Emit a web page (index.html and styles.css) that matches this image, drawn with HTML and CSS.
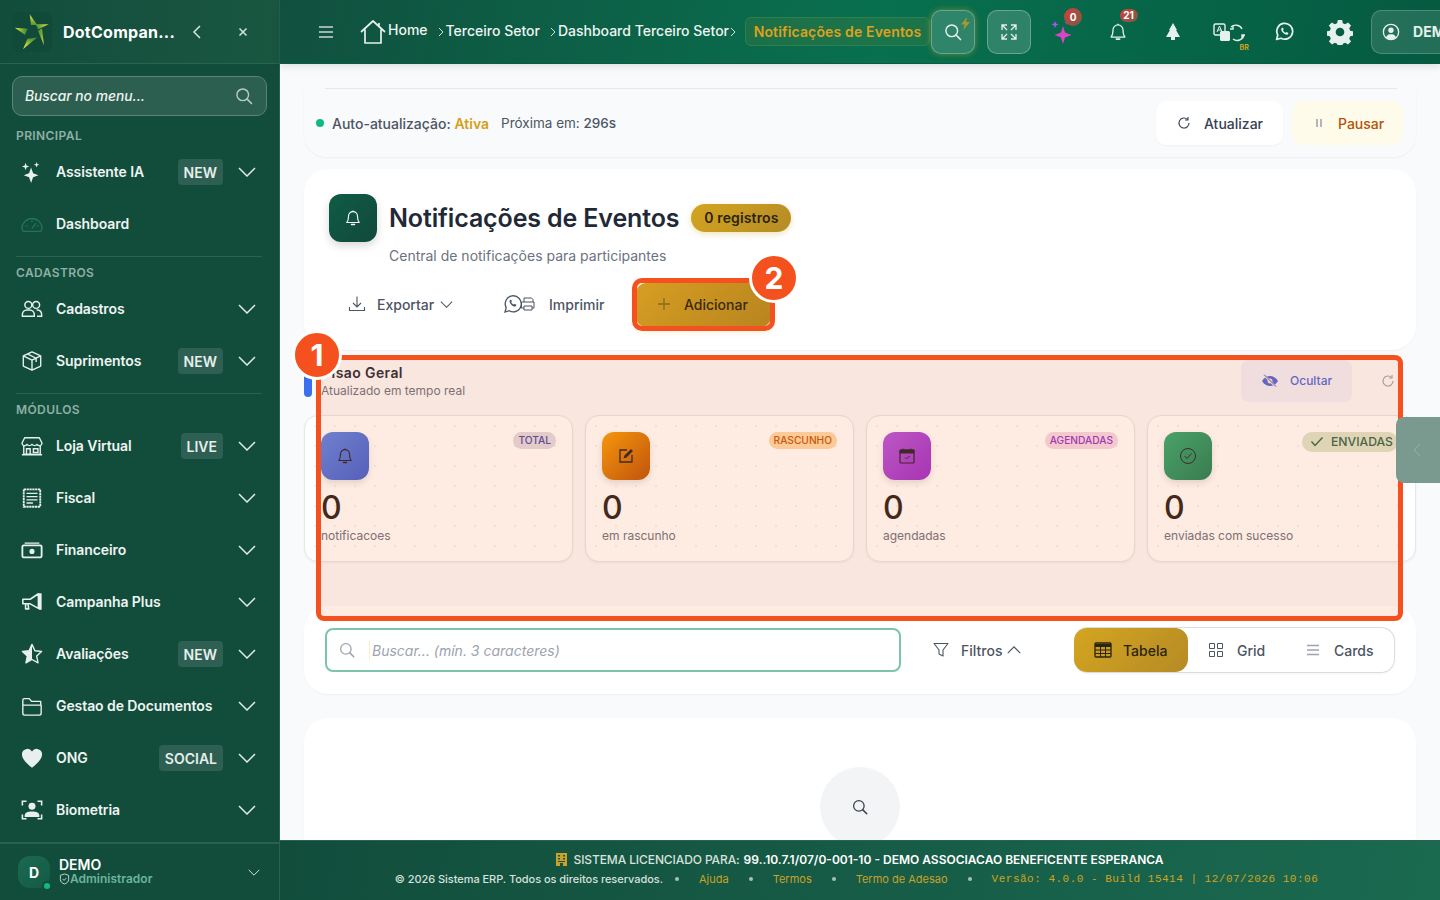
FILE: index.html
```html
<!DOCTYPE html>
<html lang="pt-BR">
<head>
<meta charset="utf-8">
<title>Notificações de Eventos</title>
<link rel="stylesheet" href="styles.css">
</head>
<body>
<svg class="sprite" xmlns="http://www.w3.org/2000/svg">
  <symbol id="chev" viewBox="0 0 18 10"><path d="M1 1l8 8 8-8" fill="none" stroke="currentColor" stroke-width="1.5"/></symbol>
  <symbol id="search" viewBox="0 0 24 24"><circle cx="10.5" cy="10.5" r="7" fill="none" stroke="currentColor" stroke-width="1.7"/><path d="M15.8 15.8L21 21" stroke="currentColor" stroke-width="2" stroke-linecap="round"/></symbol>
  <symbol id="bell" viewBox="0 0 24 24"><path d="M12 3.5a6 6 0 0 0-6 6c0 5-1 7-2.300 8.500h16.600C19 16.500 18 14.500 18 9.500a6 6 0 0 0-6-6z" fill="none" stroke="currentColor" stroke-width="1.500" stroke-linejoin="round"/><path d="M10 20.500h4" stroke="currentColor" stroke-width="2" stroke-linecap="round"/><path d="M12 2v1.500" stroke="currentColor" stroke-width="1.500"/></symbol>
  <symbol id="refresh" viewBox="0 0 24 24"><path d="M19.500 12a7.500 7.500 0 1 1-2.200-5.300" fill="none" stroke="currentColor" stroke-width="1.700"/><path d="M18 3v4.500h-4.500" fill="none" stroke="currentColor" stroke-width="1.700"/></symbol>
</svg>

<div class="app">
  <aside class="sidebar">
    <div class="brand">
      <span class="logo">
        <svg viewBox="0 0 40 40" width="40" height="40">
          <defs><radialGradient id="lg" gradientUnits="userSpaceOnUse" cx="20" cy="20" r="20"><stop offset=".2" stop-color="#1f7f3f"/><stop offset=".75" stop-color="#c8d235"/><stop offset="1" stop-color="#e6e04a"/></radialGradient></defs>
          <path d="M17.700 2.300L25 12.800 19 13zM36.700 12.300L26 17.500 23.800 12.300zM32 33.300L26 19 30 16.500zM11 37.300L25 25.500 15.500 26.800zM2.700 15.700L15.800 16.800 13 22.800z" fill="url(#lg)"/>
        </svg>
      </span>
      <span class="brand-name">DotCompan...</span>
      <svg class="brand-back" width="10" height="14" viewBox="0 0 10 14"><path d="M8 1L2 7l6 6" fill="none" stroke="currentColor" stroke-width="1.500"/></svg>
      <svg class="brand-close" width="10" height="10" viewBox="0 0 10 10"><path d="M1.500 1.500l7 7M8.500 1.500l-7 7" stroke="currentColor" stroke-width="1.500"/></svg>
    </div>
    <div class="menu-search">
      <span>Buscar no menu...</span>
      <svg width="20" height="20" class="menu-search-ico"><use href="#search"/></svg>
    </div>

    <div class="nav-label first">PRINCIPAL</div>
    <div class="nav-item">
      <svg class="nav-ico" viewBox="0 0 24 24"><path d="M11 7l2.200 6.300L19 15.500l-5.800 2.200L11 24l-2.200-6.300L3 15.500l5.800-2.200z" fill="currentColor"/><path d="M5 2l1 3 3 1-3 1-1 3-1-3-3-1 3-1zM17 1l.8 2.200L20 4l-2.200.8L17 7l-.8-2.200L14 4l2.200-.8z" fill="currentColor"/></svg>
      <span class="nav-text">Assistente IA</span><span class="nav-tag">NEW</span>
      <svg class="nav-chev"><use href="#chev"/></svg>
    </div>
    <div class="nav-item">
      <svg class="nav-ico dim" viewBox="0 0 24 24"><path d="M3 20a3 3 0 0 1-2-3 11 11 0 0 1 22 0 3 3 0 0 1-2 3z" fill="none" stroke="currentColor" stroke-width="1.400"/><path d="M12 17l4-6M5 14h2M17 14h2M12 8v2" stroke="currentColor" stroke-width="1.400"/></svg>
      <span class="nav-text">Dashboard</span>
    </div>
    <div class="nav-divider"></div>

    <div class="nav-label">CADASTROS</div>
    <div class="nav-item">
      <svg class="nav-ico" viewBox="0 0 24 24"><circle cx="8" cy="7.500" r="3.800" fill="none" stroke="currentColor" stroke-width="1.600"/><circle cx="16.500" cy="7.500" r="3.800" fill="none" stroke="currentColor" stroke-width="1.600"/><path d="M1.500 20v-2a5 5 0 0 1 5-5h3a5 5 0 0 1 5 5v2zM17 13h1a5 5 0 0 1 4.500 5v2h-5" fill="none" stroke="currentColor" stroke-width="1.600"/></svg>
      <span class="nav-text">Cadastros</span>
      <svg class="nav-chev"><use href="#chev"/></svg>
    </div>
    <div class="nav-item">
      <svg class="nav-ico" viewBox="0 0 24 24"><path d="M12 2l9.500 4.500v11L12 22l-9.500-4.500v-11zM2.500 6.500L12 11l9.500-4.500M12 11v11M7 4.300l9.500 4.700v4" fill="none" stroke="currentColor" stroke-width="1.500" stroke-linejoin="round"/></svg>
      <span class="nav-text">Suprimentos</span><span class="nav-tag">NEW</span>
      <svg class="nav-chev"><use href="#chev"/></svg>
    </div>
    <div class="nav-divider"></div>

    <div class="nav-label">MÓDULOS</div>
    <div class="nav-item">
      <svg class="nav-ico" viewBox="0 0 24 24"><path d="M4 3h16l3 6a3 3 0 0 1-5.500 1.200 3.500 3.500 0 0 1-5.500 0 3.500 3.500 0 0 1-5.500 0A3 3 0 0 1 1 9z" fill="none" stroke="currentColor" stroke-width="1.500" stroke-linejoin="round"/><path d="M3 12v9h18v-9M1 21.500h22M6 21v-6h4v6M13.500 15h5v4h-5z" fill="none" stroke="currentColor" stroke-width="1.500"/></svg>
      <span class="nav-text">Loja Virtual</span><span class="nav-tag">LIVE</span>
      <svg class="nav-chev"><use href="#chev"/></svg>
    </div>
    <div class="nav-item">
      <svg class="nav-ico" viewBox="0 0 24 24"><rect x="3" y="2.500" width="18" height="19" fill="none" stroke="currentColor" stroke-width="2" stroke-dasharray="2.500 .6"/><path d="M6 7h12M6 10.500h12M6 14h12M6 17.500h7" stroke="currentColor" stroke-width="1.500"/></svg>
      <span class="nav-text">Fiscal</span>
      <svg class="nav-chev"><use href="#chev"/></svg>
    </div>
    <div class="nav-item">
      <svg class="nav-ico" viewBox="0 0 24 24"><path d="M4 4.500h16" stroke="currentColor" stroke-width="1.400"/><rect x="1.500" y="7" width="21" height="13" rx="1.500" fill="none" stroke="currentColor" stroke-width="2"/><circle cx="12" cy="13.500" r="2.800" fill="currentColor"/></svg>
      <span class="nav-text">Financeiro</span>
      <svg class="nav-chev"><use href="#chev"/></svg>
    </div>
    <div class="nav-item">
      <svg class="nav-ico" viewBox="0 0 24 24"><path d="M2 9h8l9-6v16l-9-5H2zM5 14v5.500h3.500L7.500 14" fill="none" stroke="currentColor" stroke-width="1.700" stroke-linejoin="round"/><path d="M19.500 2.500h3v18h-3z" fill="currentColor"/></svg>
      <span class="nav-text">Campanha Plus</span>
      <svg class="nav-chev"><use href="#chev"/></svg>
    </div>
    <div class="nav-item">
      <svg class="nav-ico" viewBox="0 0 24 24"><path d="M12 1.500l3.200 7 7.300.8-5.400 5 1.500 7.400L12 18l-6.600 3.700 1.500-7.400-5.400-5 7.300-.8z" fill="none" stroke="currentColor" stroke-width="1.500" stroke-linejoin="round"/><path d="M12 1.500v16.500l-6.600 3.700 1.500-7.400-5.400-5 7.300-.8z" fill="currentColor"/></svg>
      <span class="nav-text">Avaliações</span><span class="nav-tag">NEW</span>
      <svg class="nav-chev"><use href="#chev"/></svg>
    </div>
    <div class="nav-item">
      <svg class="nav-ico" viewBox="0 0 24 24"><path d="M2 20V5.500A1.500 1.500 0 0 1 3.500 4h5.500l2.500 3h10v4M2 11h20v9a2 2 0 0 1-2 2H4a2 2 0 0 1-2-2z" fill="none" stroke="currentColor" stroke-width="1.500" stroke-linejoin="round"/></svg>
      <span class="nav-text">Gestao de Documentos</span>
      <svg class="nav-chev"><use href="#chev"/></svg>
    </div>
    <div class="nav-item">
      <svg class="nav-ico" viewBox="0 0 24 24"><path d="M12 22.500C5 17 1 13 1 8a6 6 0 0 1 11-3.200A6 6 0 0 1 23 8c0 5-4 9-11 14.500z" fill="currentColor"/></svg>
      <span class="nav-text">ONG</span><span class="nav-tag">SOCIAL</span>
      <svg class="nav-chev"><use href="#chev"/></svg>
    </div>
    <div class="nav-item">
      <svg class="nav-ico" viewBox="0 0 24 24"><path d="M1.500 7V2.500H6M18 2.500h4.500V7M1.500 17v4.500H6M18 21.500h4.500V17" fill="none" stroke="currentColor" stroke-width="1.700"/><circle cx="12" cy="8" r="3.800" fill="currentColor"/><path d="M4 19.500v-1.500c0-3 3-4.500 8-4.500s8 1.500 8 4.500v1.500z" fill="currentColor"/></svg>
      <span class="nav-text">Biometria</span>
      <svg class="nav-chev"><use href="#chev"/></svg>
    </div>

    <div class="user-box">
      <span class="avatar">D<i class="avatar-dot"></i></span>
      <span class="user-info">
        <span class="user-name">DEMO</span>
        <span class="user-role">
          <svg width="11" height="12" viewBox="0 0 12 13"><path d="M6 1l4.500 1.500V7c0 2.500-2 4-4.500 5C3.500 11 1.500 9.500 1.500 7V2.500z" fill="none" stroke="currentColor" stroke-width="1"/><path d="M4 6.500l1.500 1.500L8 5.500" fill="none" stroke="currentColor"/></svg>Administrador</span>
      </span>
      <svg class="user-chev"><use href="#chev"/></svg>
    </div>
  </aside>

  <div class="main">
    <header class="topbar">
      <svg class="burger" width="14" height="12" viewBox="0 0 14 12"><path d="M0 1h14M0 6h14M0 11h14" stroke="currentColor" stroke-width="1.400"/></svg>
      <svg class="home-ico" width="26" height="24" viewBox="0 0 26 24"><path d="M1 12L13 1l12 11M5 9.500V23h16V9.500M19 3v4" fill="none" stroke="currentColor" stroke-width="1.700" stroke-linejoin="round"/></svg>
      <span class="crumb crumb-home">Home</span>
      <svg class="sep sep-1" width="6" height="10" viewBox="0 0 6 10"><path d="M1 1l4 4-4 4" fill="none" stroke="currentColor"/></svg>
      <span class="crumb">Terceiro Setor</span>
      <svg class="sep sep-2" width="6" height="10" viewBox="0 0 6 10"><path d="M1 1l4 4-4 4" fill="none" stroke="currentColor"/></svg>
      <span class="crumb">Dashboard Terceiro Setor</span>
      <svg class="sep sep-3" width="6" height="10" viewBox="0 0 6 10"><path d="M1 1l4 4-4 4" fill="none" stroke="currentColor"/></svg>
      <span class="crumb-active">Notificações de Eventos</span>
      <span class="glass-btn search-btn">
        <svg width="20" height="20"><use href="#search"/></svg>
        <svg class="bolt" width="9" height="13" viewBox="0 0 9 13"><path d="M6 0L0 7.500h3.500L2.500 13 9 5H5z" fill="#a8982e"/></svg>
      </span>
      <span class="glass-btn expand-btn">
        <svg width="18" height="18" viewBox="0 0 18 18"><path d="M2 7V2h5M2 2l5 5M11 2h5v5M16 2l-5 5M2 11v5h5M2 16l5-5M16 11v5h-5M16 16l-5-5" fill="none" stroke="currentColor" stroke-width="1.300"/></svg>
      </span>
      <span class="slot first-slot">
        <svg width="24" height="26" viewBox="0 0 24 26"><path d="M13 7l2 6.500 6.500 2.500-6.500 2.500-2 6.500-2-6.500L4.500 16 11 13.500z" fill="#d946c4"/><path d="M5 2l1 2.500 2.500 1L6 6.500 5 9 4 6.500l-2.500-1L4 4.500zM17 1l.6 1.800 1.700.7-1.700.7L17 6l-.6-1.800-1.700-.7 1.700-.7z" fill="#a855f7"/></svg>
        <b class="count count-0">0</b>
      </span>
      <span class="slot">
        <svg width="20" height="20"><use href="#bell"/></svg>
        <b class="count count-21">21</b>
      </span>
      <span class="slot">
        <svg width="16" height="20" viewBox="0 0 16 20"><path d="M8 1l4 7h-1l4 7h-5v3H6v-3H1l4-7H4z" fill="currentColor"/></svg>
      </span>
      <span class="slot">
        <svg width="32" height="20" viewBox="0 0 32 20"><rect x="1" y="2" width="11" height="11" rx="1.500" fill="none" stroke="currentColor" stroke-width="1.400"/><rect x="7" y="9" width="10" height="10" rx="1.500" fill="currentColor"/><path d="M4 10l2.500-6L9 10M4.800 8h3.400" fill="none" stroke="currentColor"/><path d="M29 7a7 7 0 0 0-11-2M20 17a7 7 0 0 0 11-4M20 4v3h-3M29 16v-3h3" fill="none" stroke="currentColor" stroke-width="1.400"/></svg>
        <b class="lang">BR</b>
      </span>
      <span class="slot">
        <svg width="19" height="19" viewBox="0 0 24 24"><path d="M2 22l1.500-5.500A10 10 0 1 1 7.500 20.500z" fill="none" stroke="currentColor" stroke-width="2.200" stroke-linejoin="round"/><path d="M8.500 7.500c-1 1-1 3 1 5.500s4.500 3.500 6 3 1.800-2 1-2.500l-2-1-1 1c-1 0-3-2-3.500-3.500l1-1-1-2z" fill="currentColor"/></svg>
      </span>
      <span class="slot">
        <svg width="26" height="26" viewBox="0 0 24 24"><path fill="currentColor" fill-rule="evenodd" d="M10 1h4l.6 3 2.200.9 2.600-1.700 2.800 2.800-1.700 2.600.9 2.200 3 .6v4l-3 .6-.9 2.200 1.700 2.600-2.800 2.800-2.600-1.700-2.200.9-.6 3h-4l-.6-3-2.200-.9-2.600 1.700-2.800-2.800 1.700-2.600-.9-2.200-3-.6v-4l3-.6.9-2.200L1.700 6l2.800-2.800 2.600 1.700 2.200-.9zM12 8a4 4 0 1 0 0 8 4 4 0 0 0 0-8z"/></svg>
      </span>
      <span class="user-btn">
        <svg width="18" height="18" viewBox="0 0 20 20"><circle cx="10" cy="10" r="8.500" fill="none" stroke="currentColor" stroke-width="1.500"/><circle cx="10" cy="8" r="3" fill="currentColor"/><path d="M4.500 16c1-3 3-3.500 5.500-3.500s4.500.5 5.500 3.500a8 8 0 0 1-11 0z" fill="currentColor"/></svg>
        <span class="user-btn-text">DEMO</span>
      </span>
    </header>

    <main class="content">
      <section class="refresh-card">
        <div class="refresh-line"></div>
        <div class="refresh-row">
          <i class="live-dot"></i>
          <span class="refresh-text">Auto-atualização: <b class="ativa">Ativa</b></span>
          <span class="refresh-next">Próxima em: <b>296s</b></span>
          <span class="refresh-btn btn-update">
            <svg width="16" height="16"><use href="#refresh"/></svg>Atualizar
          </span>
          <span class="refresh-btn btn-pause">
            <svg width="10" height="10" viewBox="0 0 10 10"><path d="M3 1v8M7 1v8" stroke="#6b7280"/></svg>Pausar
          </span>
        </div>
      </section>

      <section class="page-card">
        <div class="title-row">
          <span class="title-ico"><svg width="18" height="18"><use href="#bell"/></svg></span>
          <h1 class="title">Notificações de Eventos</h1>
          <span class="count-pill">0 registros</span>
        </div>
        <p class="subtitle">Central de notificações para participantes</p>
        <div class="actions">
          <span class="action action-export">
            <svg width="18" height="18" viewBox="0 0 18 18"><path d="M9 1.500v10M5 8l4 4 4-4M1.500 12v3.500h15V12" fill="none" stroke="currentColor" stroke-width="1.100"/></svg>
            Exportar
            <svg width="13" height="7" class="mini-chev"><use href="#chev"/></svg>
          </span>
          <span class="action action-print">
            <svg width="31" height="18" viewBox="0 0 31 18"><path d="M1 17l1.200-4.400A8 8 0 1 1 5.200 15.700z" fill="none" stroke="currentColor" stroke-width="1.300"/><path d="M6 5c-.7.700-.7 2.300.8 4.200s3.400 2.700 4.500 2.300 1.300-1.500.7-1.900l-1.500-.7-.7.700c-.7 0-2.200-1.400-2.600-2.600l.7-.7-.7-1.500z" fill="currentColor"/><path d="M20 7V3h7.500l1.500 1.500V7M20 13h-2.500V7H30v6h-2M20 11h8v4h-8z" fill="none" stroke="currentColor"/></svg>
            <span class="print-text">Imprimir</span>
          </span>
          <span class="add-btn">
            <svg width="14" height="14" viewBox="0 0 14 14"><path d="M7 1v12M1 7h12" stroke="#8a6a1e" stroke-width="1.300"/></svg>
            Adicionar
          </span>
        </div>
      </section>

      <section class="overview">
        <div class="overview-head">
          <i class="overview-bar"></i>
          <div class="overview-titles">
            <h2 class="overview-title">Visao Geral</h2>
            <p class="overview-sub">Atualizado em tempo real</p>
          </div>
          <span class="hide-btn">
            <svg width="18" height="14" viewBox="0 0 18 14"><path d="M1 7c2-3.500 5-5 8-5s6 1.500 8 5c-2 3.500-5 5-8 5S3 10.500 1 7z" fill="currentColor"/><circle cx="9" cy="7" r="2.500" fill="#f0dede"/><path d="M3 1l12 12" stroke="#f0dede" stroke-width="2"/><path d="M3 .5l12 12" stroke="currentColor" stroke-width="1"/></svg>
            Ocultar
          </span>
          <svg class="overview-refresh" width="16" height="16"><use href="#refresh"/></svg>
        </div>
        <div class="stats">
          <article class="stat">
            <div class="stat-top"><span class="stat-ico ico-blue"><svg width="18" height="18"><use href="#bell"/></svg></span><span class="stat-tag tag-blue">TOTAL</span></div>
            <div class="stat-num">0</div>
            <div class="stat-label">notificacoes</div>
          </article>
          <article class="stat">
            <div class="stat-top"><span class="stat-ico ico-orange"><svg width="18" height="18" viewBox="0 0 18 18"><path d="M10 3H3v12h12V8" fill="none" stroke="currentColor" stroke-width="1.300"/><path d="M6.500 11.500l1-3L14 2l2 2-6.500 6.500z" fill="currentColor"/></svg></span><span class="stat-tag tag-orange">RASCUNHO</span></div>
            <div class="stat-num">0</div>
            <div class="stat-label">em rascunho</div>
          </article>
          <article class="stat">
            <div class="stat-top"><span class="stat-ico ico-purple"><svg width="18" height="18" viewBox="0 0 18 18"><rect x="2" y="3" width="14" height="13" rx="1" fill="none" stroke="currentColor" stroke-width="1.200"/><path d="M2 3h14v3H2zM5 1.500V3M13 1.500V3" fill="currentColor" stroke="currentColor"/><path d="M7 10.500l1.500 1.500 3-3" fill="none" stroke="currentColor"/></svg></span><span class="stat-tag tag-purple">AGENDADAS</span></div>
            <div class="stat-num">0</div>
            <div class="stat-label">agendadas</div>
          </article>
          <article class="stat">
            <div class="stat-top"><span class="stat-ico ico-green"><svg width="18" height="18" viewBox="0 0 18 18"><circle cx="9" cy="9" r="7.500" fill="none" stroke="currentColor"/><path d="M5.500 9l2.500 2.500 4.500-5" fill="none" stroke="currentColor"/></svg></span><span class="stat-tag tag-green"><svg width="14" height="11" viewBox="0 0 14 11"><path d="M1.500 5.500L5 9.500l7.500-8" fill="none" stroke="currentColor" stroke-width="1.400"/></svg>ENVIADAS</span></div>
            <div class="stat-num">0</div>
            <div class="stat-label">enviadas com sucesso</div>
          </article>
        </div>
      </section>

      <section class="filter-card">
        <div class="search-field">
          <svg width="18" height="18" class="field-ico"><use href="#search"/></svg>
          <i class="caret"></i>
          <span class="placeholder">Buscar... (mín. 3 caracteres)</span>
        </div>
        <span class="filter-toggle">
          <svg width="16" height="16" viewBox="0 0 16 16"><path d="M1 1.500h14L10 8v6l-4-2V8z" fill="none" stroke="currentColor" stroke-width="1.100" stroke-linejoin="round"/></svg>
          <span class="filter-text">Filtros</span>
          <svg width="14" height="8" class="up-chev"><use href="#chev"/></svg>
        </span>
        <div class="views">
          <span class="view view-active">
            <svg width="18" height="16" viewBox="0 0 18 16"><rect x="1" y="1" width="16" height="14" rx="1" fill="none" stroke="currentColor" stroke-width="1.300"/><path d="M1 2h16v3H1z" fill="currentColor"/><path d="M1 8h16M1 11.500h16M6.500 5v10M11.500 5v10" stroke="currentColor"/></svg>
            Tabela
          </span>
          <span class="view view-grid">
            <svg width="16" height="16" viewBox="0 0 16 16"><path d="M1.500 1.500h5v5h-5zM9.500 1.500h5v5h-5zM1.500 9.500h5v5h-5zM9.500 9.500h5v5h-5z" fill="none" stroke="currentColor"/></svg>
            Grid
          </span>
          <span class="view view-cards">
            <svg width="14" height="12" viewBox="0 0 14 12"><path d="M1 1.500h12M1 6h12M1 10.500h12" stroke="#9ca3af" stroke-width="1.300"/></svg>
            Cards
          </span>
        </div>
      </section>

      <section class="results-card">
        <span class="empty-circle"><svg width="18" height="18"><use href="#search"/></svg></span>
      </section>
    </main>

    <footer class="footer">
      <div class="foot-line">
        <svg width="11" height="13" viewBox="0 0 11 13"><path fill="#c9a227" fill-rule="evenodd" d="M0 0h11v13H7v-3H4v3H0zM2 2v1.500h2V2zm5 0v1.500h2V2zM2 5v1.500h2V5zm5 0v1.500h2V5zM2 8v1h7V8z"/></svg>
        <span class="foot-muted">SISTEMA LICENCIADO PARA:</span>
        <b class="foot-strong">99..10.7.1/07/0-001-10 - DEMO ASSOCIACAO BENEFICENTE ESPERANCA</b>
      </div>
      <div class="foot-line foot-small">
        <span class="foot-muted foot-copy">© 2026 Sistema ERP. Todos os direitos reservados.</span>
        <i class="foot-dot foot-dot-first"></i><span class="foot-link">Ajuda</span>
        <i class="foot-dot"></i><span class="foot-link">Termos</span>
        <i class="foot-dot"></i><span class="foot-link">Termo de Adesao</span>
        <i class="foot-dot"></i><span class="foot-version">Versão: 4.0.0 - Build 15414 | 12/07/2026 10:06</span>
      </div>
    </footer>
  </div>
</div>

<div class="side-tab"><svg width="8" height="14" viewBox="0 0 8 14"><path d="M7 1L1 7l6 6" fill="none" stroke="currentColor"/></svg></div>
<div class="mark mark-area"></div>
<div class="mark mark-button"></div>
<div class="step step-1">1</div>
<div class="step step-2">2</div>
</body>
</html>
```

FILE: styles.css
```css
* { box-sizing: border-box; }
html, body { margin: 0; height: 100%; overflow: hidden; }
body { font-family: "Inter", "Liberation Sans", sans-serif; color: #1f2937; background: #f8fafc; }
.sprite { display: none; }
h1, h2, p { margin: 0; }
i { display: block; }

.app { display: flex; width: 1440px; height: 900px; }

/* Sidebar */
.sidebar { width: 280px; flex: none; height: 900px; background: #124d3c; color: #eef4f1; display: flex; flex-direction: column; border-right: 1px solid #2a6050; position: relative; }
.brand { height: 64px; flex: none; display: flex; align-items: center; border-bottom: 1px solid #2a6352; background: linear-gradient(90deg, #124d3c, #1a5741); }
.logo { width: 40px; height: 40px; margin-left: 12px; border-radius: 8px; background: #114a39; display: block; }
.logo svg { display: block; }
.brand-name { margin-left: 11px; font-size: 16px; font-weight: 700; color: #fff; width: 118px; white-space: nowrap; letter-spacing: .25px; }
.brand-back { margin-left: 11px; color: #d8e4df; flex: none; }
.brand-close { margin-left: 36px; color: #d8e4df; flex: none; }
.menu-search { margin: 12px 12px 0; height: 40px; flex: none; display: flex; align-items: center; justify-content: space-between; padding: 0 12px 0 12px; background: #2d5f50; border: 1px solid #58847a; border-radius: 10px; font-size: 13.800px; font-style: italic; font-weight: 500; color: #eef4f1; }
.menu-search-ico { color: #b4cbc3; }
.nav-label { height: 26px; padding: 9px 16px 0; font-size: 12px; line-height: 14px; font-weight: 600; color: #8fb0a5; letter-spacing: .4px; flex: none; }
.nav-label.first { height: 30px; padding-top: 13px; }
.nav-item { height: 52px; flex: none; display: flex; align-items: center; padding: 0 23px 0 21px; }
.nav-ico { width: 22px; height: 22px; color: #e8f0ed; flex: none; }
.nav-ico.dim { color: #23725a; }
.nav-text { margin: 0 0 2px 13px; font-size: 14px; font-weight: 600; color: #eef4f1; letter-spacing: -.08px; flex: 1; white-space: nowrap; }
.nav-tag { height: 26px; padding: 0 6px; display: flex; align-items: center; background: #2d5f52; border-radius: 4px; font-size: 14px; font-weight: 600; color: #e6eeeb; margin-right: 15px; }
.nav-chev { width: 18px; height: 10px; color: #e0eae6; flex: none; }
.nav-divider { height: 1px; margin: 6px 17px 0 16px; background: #2a6352; flex: none; }
.user-box { margin-top: auto; height: 58px; flex: none; border-top: 2px solid #2a6050; display: flex; align-items: center; padding: 0 18px; }
.avatar { width: 32px; height: 32px; border-radius: 12px; background: linear-gradient(135deg, #1a6a50, #155a45); color: #fff; font-size: 14px; font-weight: 700; display: flex; align-items: center; justify-content: center; position: relative; flex: none; }
.avatar-dot { position: absolute; right: -2px; bottom: -3px; width: 10px; height: 10px; background: #10b981; border: 2px solid #124d3c; border-radius: 50%; }
.user-info { display: flex; flex-direction: column; margin: 0 0 2px 9px; flex: 1; }
.user-name { font-size: 14px; line-height: 14px; font-weight: 600; color: #fff; margin-top: 1px; }
.user-role { display: flex; align-items: center; font-size: 12px; line-height: 13px; font-weight: 600; color: #6cb49c; }
.user-role svg { color: #cfe0da; }
.user-chev { width: 12px; height: 7px; color: #cfe0da; margin-right: 1px; }

/* Main */
.main { flex: 1; min-width: 0; display: flex; flex-direction: column; height: 900px; }
.topbar { height: 64px; flex: none; display: flex; align-items: center; overflow: hidden; background: linear-gradient(100deg, #11503e 0%, #08704f 52%, #055a40 100%); color: #e6f0ec; box-shadow: 0 2px 8px rgba(0,0,0,.12); position: relative; z-index: 2; border-bottom: 1px solid #0b5a44; }
.burger { margin-left: 39px; flex: none; color: #c8d8d2; }
.home-ico { margin-left: 27px; flex: none; color: #e6f0ec; }
.crumb { font-size: 14px; font-weight: 500; color: #eef5f2; white-space: nowrap; flex: none; margin: 0 0 2px 2px; }
.crumb-home { margin: 0 0 4px 2px; }
.sep { flex: none; color: #d5e2dd; }
.sep-1 { margin-left: 10px; }
.sep-2 { margin-left: 10px; }
.sep-3 { margin-left: 1px; }
.crumb-active { margin-left: 9px; width: 185px; height: 29px; flex: none; display: flex; align-items: center; justify-content: center; padding-bottom: 1px; font-size: 14px; font-weight: 600; color: #dfa11b; border: 1px solid #2f8050; border-radius: 6px; background: rgba(200,170,40,.1); white-space: nowrap; letter-spacing: .15px; }
.glass-btn { width: 44px; height: 44px; flex: none; display: flex; align-items: center; justify-content: center; background: rgba(255,255,255,.16); border: 1px solid rgba(255,255,255,.28); border-radius: 10px; position: relative; }
.search-btn { margin-left: 1px; box-shadow: 0 0 6px rgba(200,170,40,.5); }
.expand-btn { margin-left: 12px; }
.bolt { position: absolute; right: 4px; top: 6px; }
.slot { width: 44px; height: 44px; flex: none; margin-left: 11.5px; display: flex; align-items: center; justify-content: center; position: relative; }
.first-slot { margin-left: 9px; }
.count { position: absolute; display: block; font-size: 10px; font-weight: 700; color: #fff; text-align: center; border-radius: 9px; }
.count-0 { left: 24px; top: -2px; width: 18px; height: 18px; line-height: 18px; background: linear-gradient(135deg, #dc3c3c, #6f5f48); }
.count-21 { left: 24px; top: -1px; width: 18px; height: 13px; line-height: 13px; background: linear-gradient(135deg, #dc3c3c, #6f5f48); }
.lang { position: absolute; left: 33px; top: 33px; font-size: 7px; font-weight: 700; color: #d0a31f; }
.user-btn { margin-left: 9.500px; height: 44px; flex: none; display: flex; align-items: center; padding: 0 10px; gap: 13px; width: 160px; background: rgba(255,255,255,.12); border: 1px solid rgba(255,255,255,.2); border-radius: 10px; }
.user-btn-text { font-size: 14px; font-weight: 700; }

.content { flex: 1; min-height: 0; overflow: hidden; padding: 24px 24px 0; }

.refresh-card { height: 69px; padding: 0 13px 0 12px; border-radius: 0 0 22px 22px; box-shadow: 0 1px 2px rgba(0,0,0,.05); margin-bottom: 12px; }
.refresh-line { height: 1px; background: #e5e7eb; margin: 0 6px 0 9px; }
.refresh-row { height: 68px; display: flex; align-items: center; font-size: 14px; color: #4b5563; }
.live-dot { width: 8px; height: 8px; border-radius: 50%; background: #10b981; margin-right: 8px; flex: none; }
.refresh-text { font-weight: 500; }
.ativa { color: #d4a017; font-weight: 600; }
.refresh-next { margin-left: 12px; flex: 1; font-size: 13.500px; }
.refresh-next b { font-weight: 500; color: #4b5563; }
.refresh-btn { height: 44px; display: flex; align-items: center; border-radius: 10px; flex: none; font-weight: 500; }
.btn-update { width: 127px; padding-left: 20px; gap: 12px; background: #fff; color: #374151; box-shadow: 0 1px 2px rgba(0,0,0,.04); }
.btn-pause { width: 111px; margin-left: 9px; padding-left: 22px; gap: 14px; background: #fffbeb; color: #b45309; }

.page-card { height: 181px; background: #fff; border-radius: 24px; padding: 25px 25px 0; margin-bottom: 10px; box-shadow: 0 1px 2px rgba(0,0,0,.04); }
.title-row { display: flex; align-items: center; height: 48px; }
.title-ico { width: 48px; height: 48px; border-radius: 12px; background: linear-gradient(135deg, #0f5c45, #11493a); color: #fff; display: flex; align-items: center; justify-content: center; box-shadow: 0 4px 8px rgba(0,0,0,.15); flex: none; }
.title { margin-left: 12px; font-size: 25px; line-height: 48px; font-weight: 600; color: #1f2937; white-space: nowrap; letter-spacing: -.13px; }
.count-pill { margin-left: 12px; height: 28px; width: 100px; display: flex; align-items: center; justify-content: center; padding-bottom: 1px; border-radius: 14px; background: linear-gradient(135deg, #d4a520, #b58b25); font-size: 14px; font-weight: 600; color: #2b2413; letter-spacing: .15px; box-shadow: 0 2px 6px rgba(200,160,30,.3); }
.subtitle { margin: 5px 0 0 60px; font-size: 14px; line-height: 17px; color: #6b7280; }
.actions { display: flex; align-items: center; height: 44px; margin-top: 19px; font-size: 14px; font-weight: 500; color: #4b5563; }
.action { display: flex; align-items: center; flex: none; padding-bottom: 2px; }
.action-export { margin-left: 19px; gap: 11px; width: 156px; }
.action-export svg:first-child { color: #4b5563; }
.mini-chev { margin-left: -5px; }
.action-print { width: 132px; }
.print-text { margin-left: 14px; }
.add-btn { width: 135px; height: 44px; flex: none; display: flex; align-items: center; gap: 13px; padding: 0 0 2px 21px; border-radius: 10px; background: linear-gradient(135deg, #d69e22, #b8841f); color: #3a2b0e; box-shadow: 0 3px 8px rgba(214,158,34,.3); }

.overview { height: 202px; margin-bottom: 44px; }
.overview-head { height: 55px; display: flex; align-items: flex-start; }
.overview-bar { width: 8px; height: 32px; margin-top: 5px; background: #3b6ff0; border-radius: 4px; flex: none; }
.overview-titles { margin-left: 9px; flex: 1; }
.overview-title { font-size: 14px; line-height: 18px; font-weight: 600; color: #1f2937; margin-top: 4px; letter-spacing: .4px; }
.overview-sub { font-size: 12px; line-height: 18px; color: #6b7280; }
.hide-btn { width: 111px; height: 42px; display: flex; align-items: center; gap: 11px; padding: 0 0 1px 20px; background: rgba(99,102,241,.06); border-radius: 8px; font-size: 12px; font-weight: 500; color: #4f67d8; flex: none; }
.overview-refresh { margin: 13px 20px 0 28px; color: #9ca3af; flex: none; }
.stats { display: grid; grid-template-columns: repeat(4, 1fr); gap: 12px; }
.stat { height: 147px; background-color: #fff; background-image: radial-gradient(circle, rgba(60,60,60,.07) 1px, transparent 1.2px); background-size: 20px 20px; border: 1px solid #e5e7eb; border-radius: 14px; padding: 16px 16px 0; box-shadow: 0 1px 3px rgba(0,0,0,.05); }
.stat-top { display: flex; align-items: flex-start; justify-content: space-between; height: 48px; }
.stat-ico { width: 48px; height: 48px; border-radius: 12px; display: flex; align-items: center; justify-content: center; color: #27212c; box-shadow: 0 3px 6px rgba(0,0,0,.12); flex: none; }
.ico-blue { background: linear-gradient(135deg, #5b85e8, #3f5fd0); }
.ico-orange { background: linear-gradient(135deg, #f59e0b, #b9520a); }
.ico-purple { background: linear-gradient(135deg, #b455de, #9b2ec9); }
.ico-green { background: linear-gradient(135deg, #2fac72, #1f7f58); }
.stat-tag { height: 17px; padding: 0 5px 1px; display: flex; align-items: center; border-radius: 9px; font-size: 10.200px; font-weight: 500; white-space: nowrap; }
.tag-blue { background: #e0dbe4; color: #4a4aa0; }
.tag-orange { background: #fcd9a8; color: #c2570c; }
.tag-purple { background: #f3d8e8; color: #9333c9; }
.tag-green { height: 20px; margin-right: 1px; padding: 0 5px 2px 8px; gap: 7px; border-radius: 10px; background: #dce5cd; color: #30654a; font-size: 12.200px; }
.stat-num { margin-top: 9px; font-size: 32px; line-height: 38px; font-weight: 500; color: #2a1f1c; }
.stat-label { margin-top: 1px; font-size: 12px; line-height: 16px; color: #6b7280; }

.filter-card { height: 88px; background: #fff; border-radius: 24px; display: flex; align-items: center; padding: 0 21px; margin-bottom: 24px; box-shadow: 0 1px 2px rgba(0,0,0,.04); }
.search-field { width: 576px; height: 44px; flex: none; display: flex; align-items: center; border: 2px solid #7cc4ae; border-radius: 8px; padding-left: 11px; }
.field-ico { color: #9ca3af; flex: none; }
.caret { width: 1px; height: 20px; background: #fdeec6; margin-left: 13px; flex: none; }
.placeholder { margin-left: 2px; font-size: 14px; font-style: italic; color: #9ca3af; }
.filter-toggle { display: flex; align-items: center; margin-left: 32px; width: 141px; flex: none; font-size: 14px; font-weight: 500; color: #4b5563; }
.filter-text { margin-left: 12px; }
.up-chev { margin-left: 5px; transform: rotate(180deg); }
.views { width: 321px; height: 46px; flex: none; display: flex; align-items: center; padding: 1px 0; border-radius: 14px; background: #fff; font-size: 14px; font-weight: 500; color: #4b5563; box-shadow: inset 0 0 0 1px #d9dce3, 0 1px 2px rgba(0,0,0,.05); }
.view { display: flex; align-items: center; flex: none; height: 100%; }
.view-active { width: 114px; padding-left: 20px; gap: 11px; background: linear-gradient(135deg, #d4a520, #b58b25); color: #2b2413; border-radius: 13px; }
.view-grid { width: 98px; padding-left: 20px; gap: 13px; }
.view-cards { padding-left: 20px; gap: 14px; }

.results-card { height: 300px; background: #fff; border-radius: 24px; display: flex; justify-content: center; padding-top: 49px; box-shadow: 0 1px 2px rgba(0,0,0,.04); }
.empty-circle { width: 80px; height: 80px; border-radius: 50%; background: #f3f4f6; color: #374151; display: flex; align-items: center; justify-content: center; }

.footer { height: 60px; flex: none; position: relative; z-index: 2; background: linear-gradient(100deg, #124d3c, #1a6a50); border-top: 1px solid #2a6352; display: flex; flex-direction: column; align-items: center; padding-top: 8px; }
.foot-line { display: flex; align-items: center; height: 20px; font-size: 12px; color: #fff; white-space: nowrap; gap: 6px; }
.foot-muted { color: #d6e2dd; font-weight: 500; letter-spacing: -.1px; }
.foot-strong { margin-left: -2px; font-weight: 600; }
.foot-small { font-size: 11px; margin-right: 7px; gap: 0; }
.foot-copy { letter-spacing: -.04px; }
.foot-link { color: #c9a227; }
.foot-dot { width: 4px; height: 4px; border-radius: 50%; background: #a8c0b7; margin: 0 20px; flex: none; }
.foot-dot-first { margin-left: 12px; }
.foot-version { font-family: "Liberation Mono", monospace; font-size: 11px; letter-spacing: .5px; color: #d0a31f; }

/* Overlays */
.side-tab { position: absolute; left: 1396px; top: 417px; width: 44px; height: 66px; z-index: 6; background: #7b9a8f; border-radius: 8px 0 0 8px; display: flex; align-items: center; padding-left: 17px; color: #94b0a6; }
.mark { position: absolute; z-index: 5; border: 5px solid #f4511e; pointer-events: none; }
.mark-area { left: 316px; top: 355px; width: 1087px; height: 266px; border-radius: 8px; background: rgba(244,100,30,.13); }
.mark-button { left: 632px; top: 278px; width: 143px; height: 53px; border-radius: 10px; }
.step { position: absolute; z-index: 7; width: 50px; height: 50px; border-radius: 50%; background: #f4511e; border: 3px solid #fff; color: #fff; font-size: 30px; font-weight: 700; display: flex; align-items: center; justify-content: center; }
.step-1 { left: 292px; top: 330px; }
.step-2 { left: 749px; top: 253px; }
```
